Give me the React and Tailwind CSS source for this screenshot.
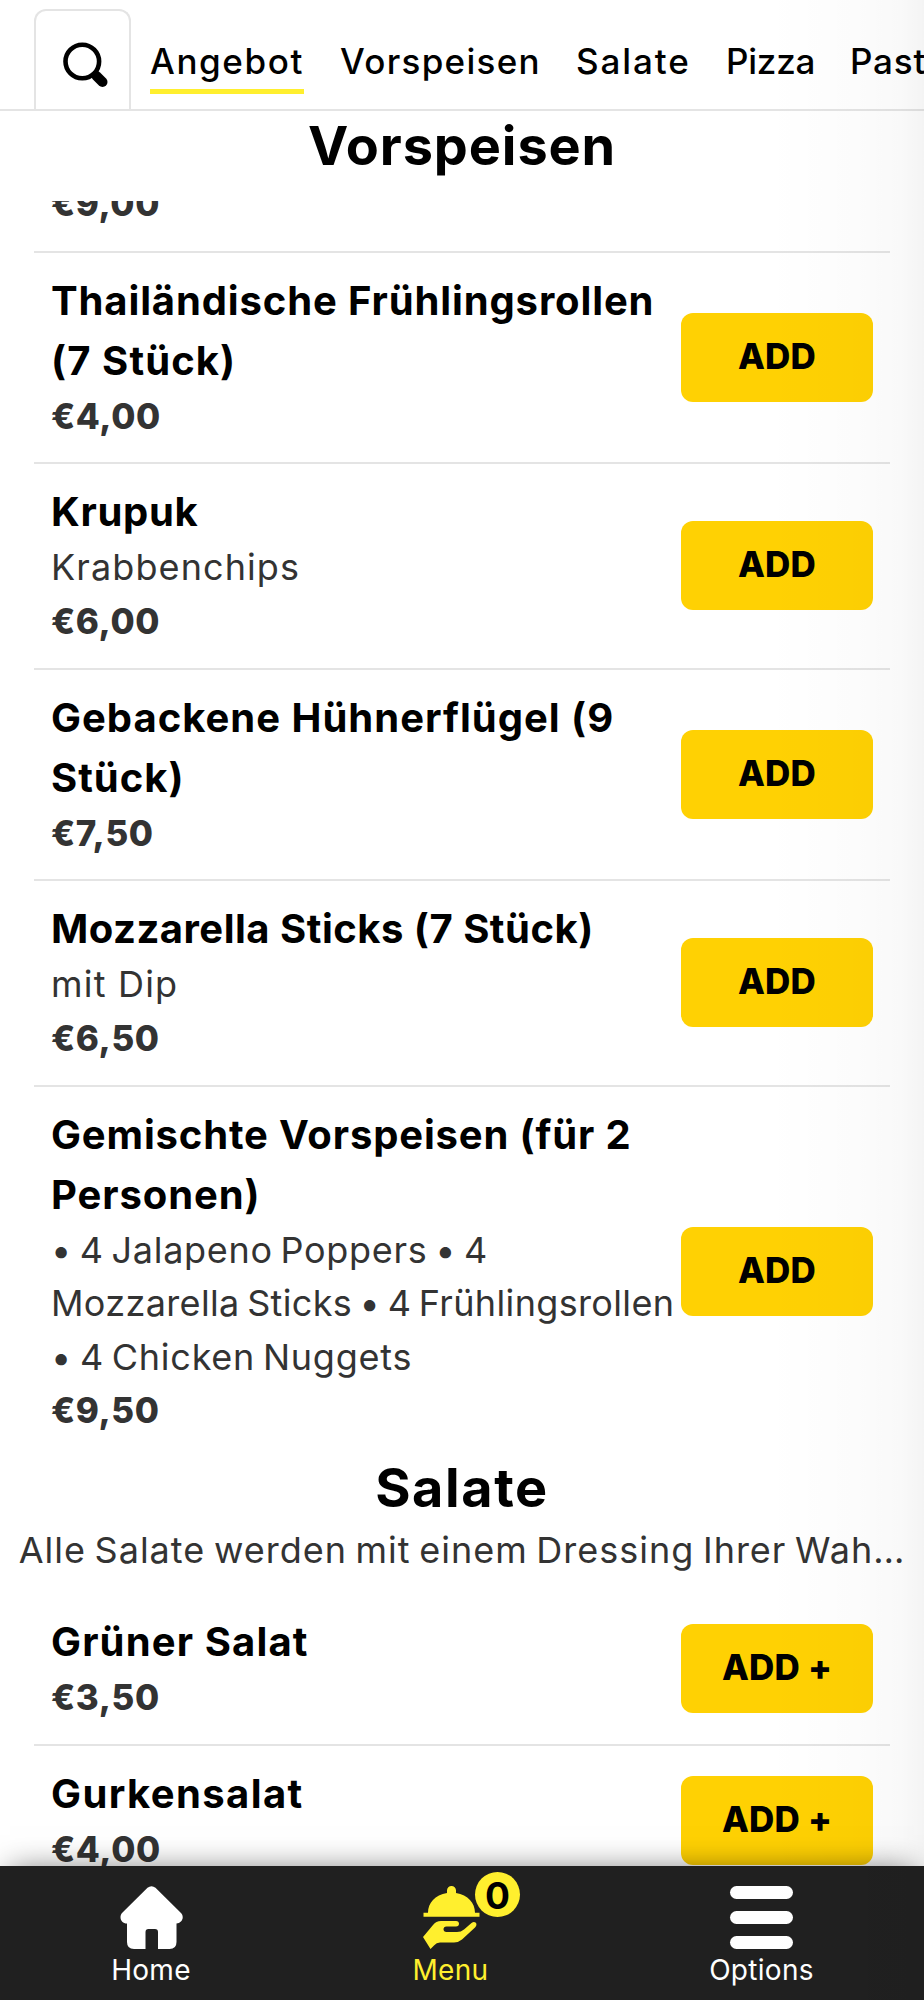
import React from 'react';

const categories = [
    { name: 'Angebot', style: 'w-[154px] tracking-[1.6px]', active: true },
    { name: 'Vorspeisen', style: 'w-[200px] tracking-[1.3px]' },
    { name: 'Salate', style: 'w-[114px] tracking-[1.9px]' },
    { name: 'Pizza', style: 'w-[88px] tracking-[-0.2px]' },
    { name: 'Pasta', style: 'w-[96px] tracking-[0.8px]' }
];

const starters = [
    {
        title: [
            { text: 'Thailändische Frühlingsrollen', style: 'tracking-[0.87px]' },
            { text: '(7 Stück)', style: 'tracking-[1.1px]' }
        ],
        desc: [],
        price: '€4,00'
    },
    {
        title: [{ text: 'Krupuk', style: 'tracking-[0.7px]' }],
        desc: [{ text: 'Krabbenchips', style: 'tracking-[1.1px]' }],
        price: '€6,00'
    },
    {
        title: [
            { text: 'Gebackene Hühnerflügel (9', style: 'tracking-[1px]' },
            { text: 'Stück)', style: 'tracking-[1px]' }
        ],
        desc: [],
        price: '€7,50'
    },
    {
        title: [{ text: 'Mozzarella Sticks (7 Stück)', style: 'tracking-[0.5px]' }],
        desc: [{ text: 'mit Dip', style: 'tracking-[1.2px]' }],
        price: '€6,50'
    },
    {
        title: [
            { text: 'Gemischte Vorspeisen (für 2', style: 'tracking-[0.85px]' },
            { text: 'Personen)', style: 'tracking-[0.9px]' }
        ],
        desc: [
            { text: '• 4 Jalapeno Poppers • 4', style: 'tracking-[0.7px] [word-spacing:-3px]' },
            { text: 'Mozzarella Sticks • 4 Frühlingsrollen', style: 'tracking-[0.35px] [word-spacing:-3px]' },
            { text: '• 4 Chicken Nuggets', style: 'tracking-[0.75px] [word-spacing:-3px]' }
        ],
        price: '€9,50'
    }
];

const salads = [
    { title: [{ text: 'Grüner Salat', style: 'tracking-[1.15px]' }], desc: [], price: '€3,50' },
    { title: [{ text: 'Gurkensalat', style: 'tracking-[1.4px]' }], desc: [], price: '€4,00' }
];

const SearchIcon = () => (
    <svg width="46" height="46" viewBox="0 0 46 46" fill="none">
        <circle cx="19.3" cy="19.5" r="16.8" stroke="black" strokeWidth="4.6" />
        <path d="M31 31L33 33" stroke="black" strokeWidth="7" />
        <path d="M33.5 34L39.5 40" stroke="black" strokeWidth="10" strokeLinecap="round" />
    </svg>
);

const HomeIcon = () => (
    <svg width="63" height="63" viewBox="0 0 63 63" fill="white">
        <path d="M27.5 1.8Q31.5 -1.2 35.5 1.8L61 27C65 31.5 61.5 37.5 56.5 37.5V56Q56.5 63 49.5 63H38V46Q38 43 35 43H28.5Q25.5 43 25.5 46V63H14Q7 63 7 56V37.5C1.5 37.5 -1.5 31.5 2 27Z" />
    </svg>
);

const DishIcon = () => (
    <svg className="ml-[2px]" width="57" height="63" viewBox="0 0 57 63" fill="currentColor">
        <path d="M24 7V4.5A4.5 4.5 0 0 1 33 4.5V7C45 9 52 17 52 26.7H56.5V30.7H.5V26.7H5C5 17 12 9 24 7Z" />
        <path d="M0 51L10 39Q13 35 18 35H33C37 35 37 40.5 33 40.5H23.5C19.5 40.5 19.5 46 23.5 46H34Q38 46 41 43.5L48.5 37C52 34 55.5 38 52 41.5L39 53.5Q35.5 56.5 31 56.5H17Q13.5 56.5 11 59.5L7.5 63Z" />
    </svg>
);

const BurgerIcon = () => (
    <div className="flex h-[63px] w-[63px] flex-col justify-between">
        <span className="h-[13px] rounded-full bg-white" />
        <span className="h-[13px] rounded-full bg-white" />
        <span className="h-[13px] rounded-full bg-white" />
    </div>
);

const MenuItem = ({ item, action, last }) => (
    <div className={`mx-[34px] flex items-center justify-between px-[17px] pt-[18px] pb-[18.3px] ${last ? '' : 'border-b-2 border-[#e4e4e4]'}`}>
        <div className="w-[628px] whitespace-nowrap">
            {item.title.map((line) => (
                <h3 key={line.text} className={`h-[60px] text-[40px] leading-[60px] font-bold text-black ${line.style}`}>{line.text}</h3>
            ))}
            {item.desc.map((line) => (
                <p key={line.text} className={`h-[53.5px] text-[36px] leading-[51px] text-[#333] ${line.style}`}>{line.text}</p>
            ))}
            <p className="h-[53.5px] text-[35px] leading-[50px] font-extrabold tracking-[0.6px] text-[#333]">{item.price}</p>
        </div>
        <button className="h-[89px] w-[192px] shrink-0 rounded-xl bg-[#ffd103] pb-[3px] text-[35px] font-extrabold tracking-[0.2px] text-black">{action}</button>
    </div>
);

const App = () => {
    return (
        <div className="relative flex h-[2000px] w-[924px] flex-col overflow-hidden bg-white font-['Inter',sans-serif]">
            <header className="flex h-[111px] shrink-0 items-end border-b-2 border-[#e4e4e4] pl-[34px]">
                <div className="mr-[19px] flex h-[100px] w-[97px] shrink-0 items-center justify-center rounded-t-xl border-2 border-b-0 border-[#e4e4e4] pt-[10px] pl-[6px]">
                    <SearchIcon />
                </div>
                <nav className="flex h-full gap-9 pt-[33px]">
                    {categories.map((c) => (
                        <a key={c.name} className={`h-[61px] shrink-0 text-[35px] leading-[56px] font-medium whitespace-nowrap text-black ${c.style} ${c.active ? 'border-b-5 border-[#ffef2e]' : ''}`}>{c.name}</a>
                    ))}
                </nav>
            </header>

            <h2 className="h-[90px] shrink-0 text-center text-[54px] leading-[70px] font-bold tracking-[0.9px] text-black">Vorspeisen</h2>

            <main className="flex-1 overflow-hidden">
                <div className="mx-[34px] h-[51.6px] overflow-hidden border-b-2 border-[#e4e4e4] pl-[17px]">
                    <p className="-mt-[25px] text-[35px] leading-[54px] font-extrabold tracking-[0.6px] text-[#333]">€9,00</p>
                </div>
                {starters.map((item, i) => (
                    <MenuItem key={item.price + i} item={item} action="ADD" last={i === starters.length - 1} />
                ))}
                <h2 className="h-[66px] text-center text-[54px] leading-[62px] font-bold tracking-[1.6px] text-black">Salate</h2>
                <p className="h-[71px] text-center text-[36px] leading-[54px] tracking-[1px] whitespace-nowrap text-[#333] [word-spacing:-2.5px]">Alle Salate werden mit einem Dressing Ihrer Wah…</p>
                {salads.map((item, i) => (
                    <MenuItem key={item.price + i} item={item} action="ADD +" last={i === salads.length - 1} />
                ))}
            </main>

            <footer className="z-10 flex h-[134px] shrink-0 bg-[#202020] pt-5 text-[28px] leading-[42px] tracking-[0.3px] text-white shadow-[0_-5px_30px_-10px_rgba(0,0,0,0.6)]">
                <div className="flex w-[302px] flex-col items-center">
                    <HomeIcon />
                    <span>Home</span>
                </div>
                <div className="relative flex w-[297px] flex-col items-center text-[#ffef2e]">
                    <DishIcon />
                    <span>Menu</span>
                    <span className="absolute -top-[14px] left-[173px] flex h-[45px] w-[45px] items-center justify-center rounded-full bg-[#ffef2e] pt-[3px] text-[37px] font-bold tracking-normal text-black">0</span>
                </div>
                <div className="flex w-[325px] flex-col items-center">
                    <BurgerIcon />
                    <span>Options</span>
                </div>
            </footer>

            {/* soft shade along the right edge */}
            <div className="pointer-events-none absolute inset-y-0 right-0 z-20 w-[160px] bg-[linear-gradient(to_right,rgba(0,0,0,0)_0%,rgba(0,0,0,0.01)_55%,rgba(0,0,0,0.022)_85%,rgba(0,0,0,0.045)_100%)]" />
        </div>
    );
};

export default App;
